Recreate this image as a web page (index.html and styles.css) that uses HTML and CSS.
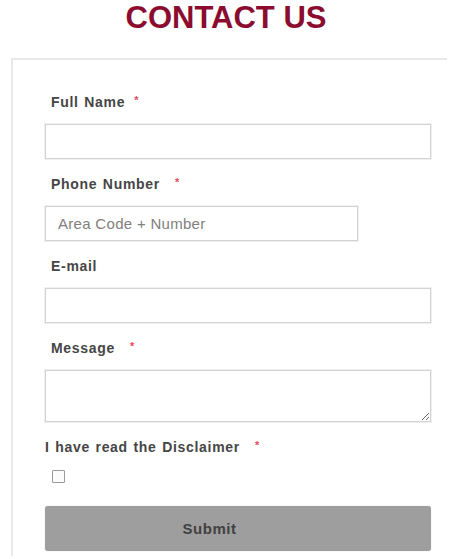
FILE: index.html
```html
<!DOCTYPE html>
<html lang="en">
<head>
<meta charset="utf-8">
<title>Contact Us</title>
<link rel="stylesheet" href="styles.css">
</head>
<body>
<h1 class="title">CONTACT US</h1>
<form class="card">
  <div class="field">
    <label class="lbl">Full Name<span class="req">*</span></label>
    <input class="inp" type="text">
  </div>
  <div class="field">
    <label class="lbl">Phone Number<span class="req req-wide">*</span></label>
    <input class="inp inp-short" type="text" placeholder="Area Code + Number">
  </div>
  <div class="field">
    <label class="lbl">E-mail</label>
    <input class="inp" type="text">
  </div>
  <div class="field">
    <label class="lbl">Message<span class="req req-wide">*</span></label>
    <textarea class="inp area"></textarea>
  </div>
  <div class="field-check">
    <label class="lbl lbl-flush">I have read the Disclaimer<span class="req req-wide">*</span></label>
    <input class="check" type="checkbox">
  </div>
  <button class="submit" type="button">Submit</button>
</form>
</body>
</html>
```

FILE: styles.css
```css
html, body {
  margin: 0;
  padding: 0;
  background: #ffffff;
  font-family: "Liberation Sans", Arial, sans-serif;
  overflow: hidden;
}

.title {
  margin: 0 0 22px 0;
  text-align: center;
  font-size: 31px;
  line-height: 36px;
  font-weight: 700;
  color: #8b0c2f;
}

.card {
  margin: 0 5px 0 11px;
  border-top: 2px solid #e9e9e9;
  border-left: 2px solid #e9e9e9;
  padding: 33px 16px 0 32px;
  height: 463px;
}

.field {
  margin-bottom: 16px;
}

.lbl {
  display: block;
  padding-left: 6px;
  margin-bottom: 13px;
  font-size: 14px;
  line-height: 18px;
  font-weight: 700;
  letter-spacing: 0.7px;
  word-spacing: 1px;
  color: #454545;
}

.lbl-flush {
  padding-left: 0;
  margin-bottom: 14px;
}

.req {
  display: inline-block;
  vertical-align: top;
  margin-left: 9px;
  margin-top: 1px;
  font-size: 11px;
  line-height: 12px;
  color: #e8485c;
}

.req-wide {
  margin-left: 15px;
}

.inp {
  display: block;
  box-sizing: border-box;
  width: 100%;
  height: 35px;
  margin: 0;
  padding: 0 12px;
  border: 1px solid #d2d2d2;
  border-radius: 0;
  box-shadow: 0 0 0 1px #f0f0f0;
  background: #ffffff;
  font-family: "Liberation Sans", Arial, sans-serif;
  font-size: 15px;
  letter-spacing: 0.3px;
  color: #444444;
  outline: none;
}

.inp::placeholder {
  color: #808080;
}

.inp-short {
  width: 313px;
}

.area {
  height: 52px;
  resize: vertical;
}

.field-check {
  margin-bottom: 23px;
}

.check {
  appearance: none;
  -webkit-appearance: none;
  display: block;
  box-sizing: border-box;
  width: 13px;
  height: 13px;
  margin: 0 0 0 7px;
  border: 1px solid #9a9a9a;
  border-radius: 1px;
  background: #fbfbfb;
}

.submit {
  display: block;
  box-sizing: border-box;
  width: 100%;
  height: 45px;
  margin: 0;
  padding: 0 57px 0 0;
  border: none;
  border-radius: 3px;
  background: #9e9e9e;
  box-shadow: 0 0 1px rgba(0, 0, 0, 0.25);
  font-family: "Liberation Sans", Arial, sans-serif;
  font-size: 15px;
  font-weight: 700;
  letter-spacing: 0.5px;
  color: #414141;
}
```
